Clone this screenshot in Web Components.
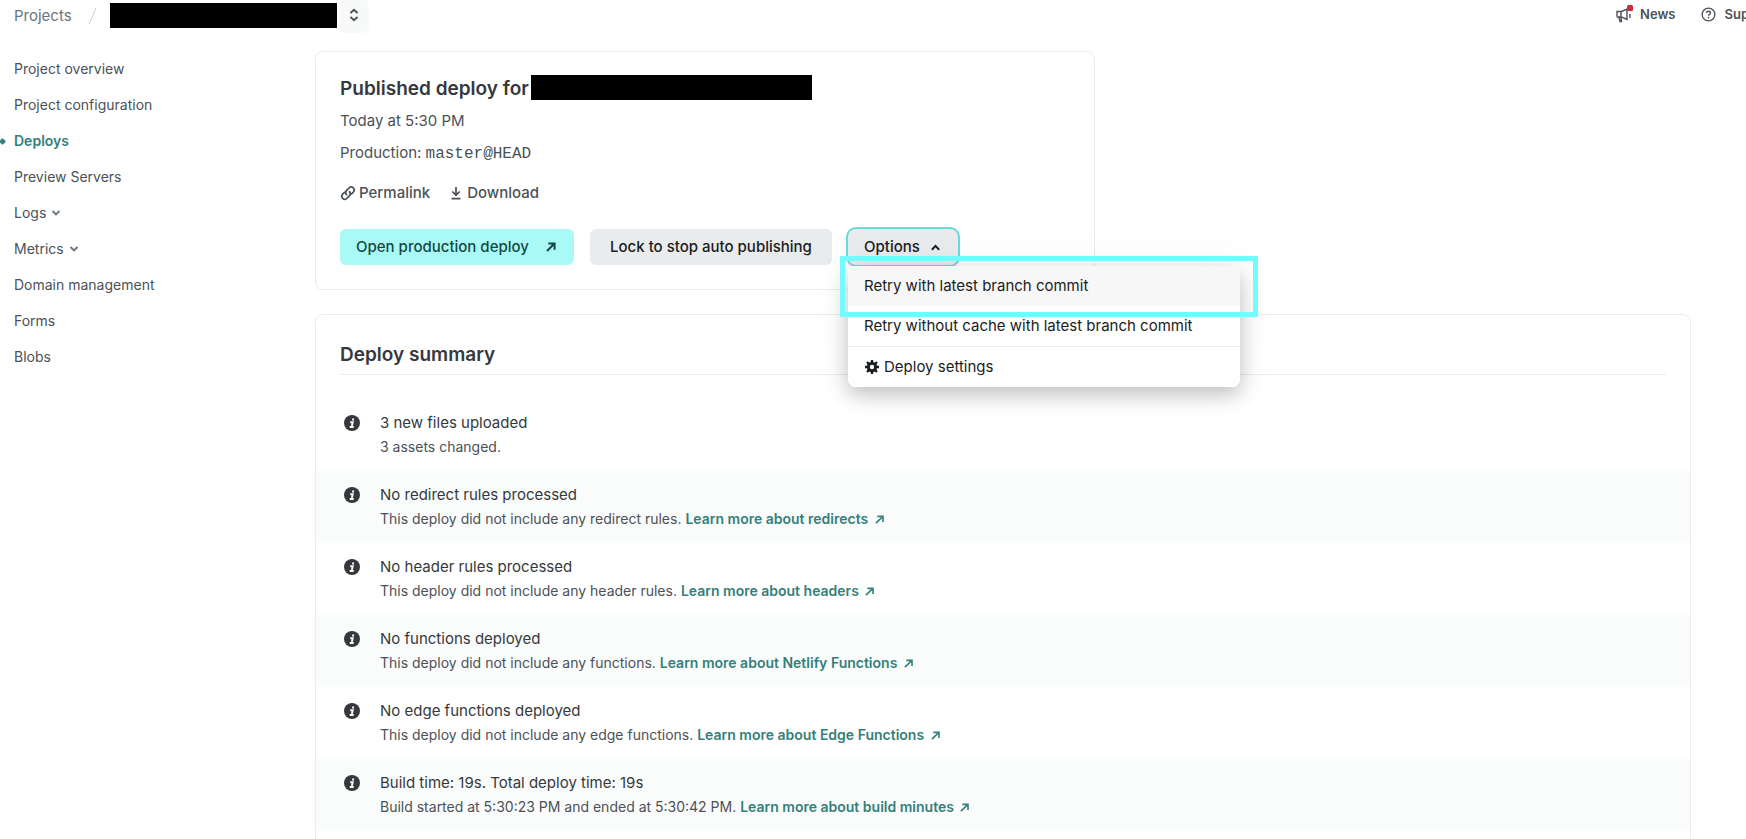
<!DOCTYPE html>
<html lang="en">
<head>
<meta charset="utf-8">
<title>Deploys</title>
<style>
  html { overflow-x: hidden; }
  body {
    margin: 0;
    background: #fff;
    color: #4c5157;
    font: 400 15px/24px Inter, "Liberation Sans", sans-serif;
    --strong: #35393d;
    --teal: #34807a;
    --line: #e9ebed;
    --stripe: #fafcfb;
  }
</style>
</head>
<body>
<deploy-page></deploy-page>

<script>
const define = (name, html, setup) => {
  const template = document.createElement('template');
  template.innerHTML = html;
  customElements.define(name, class extends HTMLElement {
    constructor() {
      super();
      this.attachShadow({ mode: 'open' }).append(template.content.cloneNode(true));
    }
    connectedCallback() { if (setup) setup(this, this.shadowRoot); }
  });
};

const ICONS = {
  updown: ['0 0 16 16', '<path d="M4.500 6L8 2.800 11.500 6M4.500 10L8 13.200 11.500 10" fill="none" stroke="currentColor" stroke-width="2"/>'],
  down: ['0 0 16 16', '<path d="M1 4l7 7 7-7" fill="none" stroke="currentColor" stroke-width="3.800"/>'],
  up: ['0 0 16 16', '<path d="M1.500 12l6.500-7 6.500 7" fill="none" stroke="currentColor" stroke-width="3.400"/>'],
  arrow: ['0 0 10 10', '<path d="M1 9l7.600-7.200M2.600 1.500h6.300v6.300" fill="none" stroke="currentColor" stroke-width="1.800"/>'],
  boldarrow: ['0 0 10 10', '<path d="M1 9l7-7M2.300 1.500h6.300v6.300" fill="none" stroke="currentColor" stroke-width="2"/>'],
  link: ['0 0 16 16', '<g fill="none" stroke="currentColor" stroke-width="1.700" stroke-linecap="round"><path d="M6.600 9.600a3 3 0 0 1 0-4.200l2.800-2.800a3 3 0 0 1 4.200 4.200l-2 2"/><path d="M9.400 6.600a3 3 0 0 1 0 4.200l-2.800 2.800a3 3 0 0 1-4.200-4.200l2-2"/></g>'],
  download: ['0 0 16 16', '<path d="M8 2v8M4.300 6.500L8 10.200l3.700-3.700M3.500 13.600h9" fill="none" stroke="currentColor" stroke-width="1.700"/>'],
  gear: ['0 0 16 16', '<g fill="none" stroke="currentColor"><circle cx="8" cy="8" r="3.700" stroke-width="3"/><path d="M8 3.500V1M8 12.500V15M3.500 8H1M12.500 8H15M4.800 4.800L3 3M11.200 11.200L13 13M4.800 11.200L3 13M11.200 4.800L13 3" stroke-width="2.400"/></g>'],
  info: ['0 0 16 16', '<circle cx="8" cy="8" r="8" fill="currentColor"/><g fill="none" stroke="#fff" stroke-width="1.900"><path d="M8.100 4.500h2" stroke-width="2"/><path d="M6.200 7.200h2.500L7.800 11.600M5.700 12h4"/></g>'],
  help: ['0 0 16 16', '<circle cx="8" cy="8" r="6.800" fill="none" stroke="currentColor" stroke-width="1.400"/><path d="M5.900 6.500c0-1.200.9-2 2.100-2s2.100.8 2.100 1.900c0 1.400-2.100 1.500-2.100 3" fill="none" stroke="currentColor" stroke-width="1.400"/><circle cx="8" cy="11.400" r=".9" fill="currentColor"/>'],
  news: ['0 0 16 18', '<g fill="none" stroke="currentColor" stroke-width="1.400"><path d="M1 6.500h4.500L11 4v10.500L5.500 12H1.500L1 11zM5 6.500V12M3 12.500l1 4h1.500l-.6-4M14 9v4"/></g><rect x="11" y="0" width="6" height="6" rx="1.500" fill="#c92d3f"/>'],
};

define('ui-icon', `
  <style>
    :host { display: inline-flex; flex: none; width: 16px; height: 16px; }
    svg { width: 100%; height: 100%; overflow: visible; }
  </style>
  <svg aria-hidden="true"></svg>`,
  (host, root) => {
    const [box, shapes] = ICONS[host.getAttribute('name')];
    const svg = root.querySelector('svg');
    svg.setAttribute('viewBox', box);
    svg.innerHTML = shapes;
  });

define('hidden-name', `
  <style>
    :host { display: block; flex: none; height: 25px; background: #000; }
  </style>`);

define('top-bar', `
  <style>
    :host { display: flex; align-items: flex-start; justify-content: space-between; height: 33px; white-space: nowrap; }
    nav { display: flex; align-items: center; }
    .crumbs { padding-left: 14px; height: 31px; }
    a { color: #6b7580; text-decoration: none; }
    .slash { width: 9px; height: 16px; margin: 0 13px 0 16px; color: #c8cdd1; }
    hidden-name { width: 227px; margin-right: 2px; }
    button { display: flex; align-items: center; justify-content: center; align-self: flex-start; width: 30px; height: 33px; padding: 0 0 3px; border: 0; border-radius: 6px; background: #f8faf9; color: #4c5157; }
    .tools { gap: 26px; height: 28px; margin-right: -3px; }
    .tools a { display: flex; align-items: center; gap: 8px; color: #4c5157; font-size: 13px; font-weight: 600; }
    .tools .news { height: 18px; }
    .tools .help { width: 15px; height: 15px; }
  </style>
  <nav class="crumbs" aria-label="Breadcrumb">
    <a href="#projects">Projects</a>
    <svg class="slash" viewBox="0 0 9 16" aria-hidden="true"><path d="M1 16L8 0" stroke="currentColor" fill="none"/></svg>
    <hidden-name></hidden-name>
    <button type="button" aria-label="Switch project"><ui-icon name="updown"></ui-icon></button>
  </nav>
  <nav class="tools" aria-label="Help">
    <a href="#news"><ui-icon class="news" name="news"></ui-icon>News</a>
    <a href="#support"><ui-icon class="help" name="help"></ui-icon>Sup</a>
  </nav>`);

define('nav-item', `
  <style>
    :host { display: block; }
    a { display: flex; align-items: center; gap: 6px; height: 36px; padding-left: 14px; position: relative; color: #4c5157; font-size: 14px; text-decoration: none; }
    ui-icon { width: 8px; height: 8px; color: #6b7580; }
    :host(:not([menu])) ui-icon { display: none; }
    :host([current]) a { color: var(--teal); font-weight: 600; }
    :host([current]) a::before { content: ""; position: absolute; left: 0; width: 5px; height: 5px; border-radius: 1px; background: var(--teal); transform: rotate(45deg); }
  </style>
  <a href="#section"><slot></slot><ui-icon name="down"></ui-icon></a>`);

define('side-nav', `
  <style>
    :host { display: block; }
  </style>
  <nav aria-label="Project">
    <nav-item>Project overview</nav-item>
    <nav-item>Project configuration</nav-item>
    <nav-item current>Deploys</nav-item>
    <nav-item>Preview Servers</nav-item>
    <nav-item menu>Logs</nav-item>
    <nav-item menu>Metrics</nav-item>
    <nav-item>Domain management</nav-item>
    <nav-item>Forms</nav-item>
    <nav-item>Blobs</nav-item>
  </nav>`);

define('options-menu', `
  <style>
    :host { display: block; position: relative; font-weight: 500; }
    .toggle { display: flex; align-items: center; justify-content: space-between; height: 36px; min-width: 110px; padding: 0 18px 0 16px; border: 0; border-radius: 8px; background: #e9ebed; box-shadow: 0 0 0 2px #66dcda; color: #1a1d20; font: inherit; }
    .toggle ui-icon { width: 9px; height: 9px; }
    .menu { position: absolute; z-index: 1; top: 37px; left: 0; width: 392px; border-radius: 0 0 8px 8px; overflow: hidden; background: #fff; font-weight: 400; }
    .shade { position: absolute; top: 37px; left: 0; width: 392px; height: 121px; border-radius: 8px; box-shadow: 0 8px 20px rgba(0,0,0,.22), 0 0 44px rgba(0,0,0,.06); }
    .menu button, .menu a { display: flex; align-items: center; gap: 4px; box-sizing: border-box; width: 100%; height: 40px; padding: 0 16px; border: 0; background: none; color: #1a1d20; font: inherit; text-decoration: none; white-space: nowrap; }
    .menu .active { background: #f7f7f7; }
    .menu a { border-top: 1px solid var(--line); height: 41px; }
    .marker { position: absolute; z-index: 2; top: 27px; left: -8px; box-sizing: border-box; width: 418px; height: 61px; border: 5px solid #73fbfd; pointer-events: none; }
  </style>
  <button class="toggle" type="button" aria-expanded="true">Options <ui-icon name="up"></ui-icon></button>
  <div class="shade"></div>
  <div class="menu">
    <button class="active" type="button">Retry with latest branch commit</button>
    <button type="button">Retry without cache with latest branch commit</button>
    <a href="#settings"><ui-icon name="gear"></ui-icon>Deploy settings</a>
  </div>
  <div class="marker"></div>`);

define('ui-card', `
  <style>
    :host { display: block; border: 1px solid var(--line); border-radius: 8px; background: #fff; }
  </style>
  <slot></slot>`);

define('published-deploy', `
  <style>
    :host { display: block; padding: 23px 24px 24px; }
    .title { display: flex; gap: 2px; margin-bottom: 6px; }
    h1 { margin: 0; color: var(--strong); font-size: 19px; font-weight: 600; line-height: 28px; }
    hidden-name { width: 281px; }
    p { margin: 0 0 8px; }
    code { font: 16px/20px "Liberation Mono", monospace; }
    .links { display: flex; gap: 18px; margin: 16px 0 24px; }
    .links a { display: flex; align-items: center; gap: 3px; color: #4c5157; font-weight: 500; text-decoration: none; }
    .actions { display: flex; gap: 16px; }
    .button { display: flex; align-items: center; justify-content: center; box-sizing: border-box; height: 36px; padding: 0 16px; border: 0; border-radius: 6px; background: #e9ebed; color: #1a1d20; font: inherit; font-weight: 500; text-decoration: none; white-space: nowrap; }
    .primary { justify-content: space-between; min-width: 234px; padding-right: 18px; background: #a9faf6; color: #134845; }
    .primary ui-icon { width: 10px; height: 10px; }
    .lock { min-width: 242px; }
  </style>
  <div class="title"><h1>Published deploy for</h1><hidden-name></hidden-name></div>
  <p>Today at 5:30 PM</p>
  <p>Production: <code>master@HEAD</code></p>
  <div class="links">
    <a href="#permalink"><ui-icon name="link"></ui-icon>Permalink</a>
    <a href="#download"><ui-icon name="download"></ui-icon>Download</a>
  </div>
  <div class="actions">
    <a class="button primary" href="#open">Open production deploy <ui-icon name="boldarrow"></ui-icon></a>
    <button class="button lock" type="button">Lock to stop auto publishing</button>
    <options-menu></options-menu>
  </div>`);

define('summary-row', `
  <style>
    :host { display: flex; gap: 20px; padding: 12px 28px; }
    :host(:nth-of-type(even)) { background: var(--stripe); }
    ui-icon { margin-top: 4px; color: var(--strong); }
    h3 { margin: 0; color: var(--strong); font-size: 15px; font-weight: 400; line-height: 24px; }
    p { margin: 0; font-size: 14px; line-height: 24px; }
  </style>
  <ui-icon name="info"></ui-icon>
  <div><h3><slot name="title"></slot></h3><p><slot></slot></p></div>`);

define('learn-more', `
  <style>
    :host { display: inline; }
    a { color: var(--teal); font-weight: 600; text-decoration: none; }
    ui-icon { width: 9px; height: 9px; margin-left: 3px; }
  </style>
  <a href="#docs"><slot></slot> <ui-icon name="arrow"></ui-icon></a>`);

define('deploy-summary', `
  <style>
    :host { display: block; padding: 24px 0; }
    h2 { margin: 0 24px 24px; padding-bottom: 3px; border-bottom: 1px solid var(--line); color: var(--strong); font-size: 19px; font-weight: 600; line-height: 32px; }
  </style>
  <h2>Deploy summary</h2>
  <summary-row><span slot="title">3 new files uploaded</span>3 assets changed.</summary-row>
  <summary-row><span slot="title">No redirect rules processed</span>This deploy did not include any redirect rules. <learn-more>Learn more about redirects</learn-more></summary-row>
  <summary-row><span slot="title">No header rules processed</span>This deploy did not include any header rules. <learn-more>Learn more about headers</learn-more></summary-row>
  <summary-row><span slot="title">No functions deployed</span>This deploy did not include any functions. <learn-more>Learn more about Netlify Functions</learn-more></summary-row>
  <summary-row><span slot="title">No edge functions deployed</span>This deploy did not include any edge functions. <learn-more>Learn more about Edge Functions</learn-more></summary-row>
  <summary-row><span slot="title">Build time: 19s. Total deploy time: 19s</span>Build started at 5:30:23 PM and ended at 5:30:42 PM. <learn-more>Learn more about build minutes</learn-more></summary-row>`);

define('deploy-page', `
  <style>
    :host { display: block; }
    .columns { display: grid; grid-template-columns: 315px minmax(0, 1fr); padding: 18px 55px 0 0; }
    main { display: grid; gap: 24px; }
    .published { position: relative; z-index: 1; box-sizing: border-box; width: 100%; max-width: 780px; }
  </style>
  <top-bar></top-bar>
  <div class="columns">
    <side-nav></side-nav>
    <main>
      <ui-card class="published"><published-deploy></published-deploy></ui-card>
      <ui-card><deploy-summary></deploy-summary></ui-card>
    </main>
  </div>`);
</script>
</body>
</html>
